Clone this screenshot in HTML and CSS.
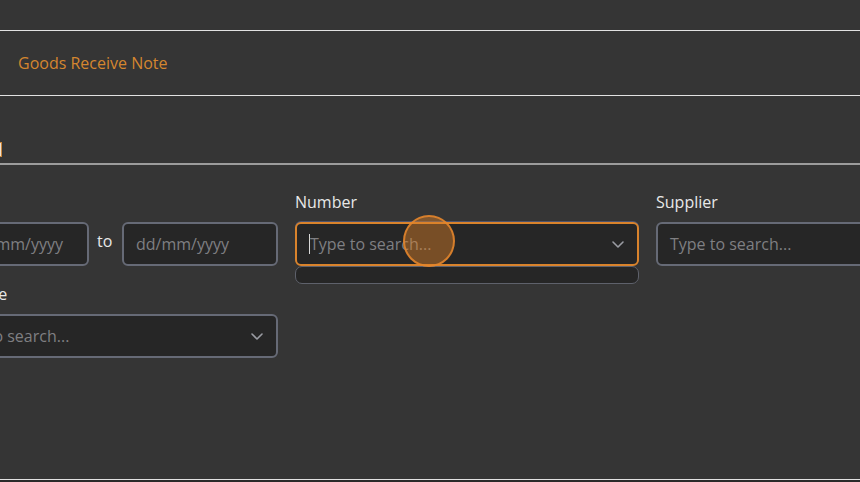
FILE: index.html
```html
<!DOCTYPE html>
<html>
<head>
<meta charset="utf-8">
<link rel="stylesheet" href="styles.css">
</head>
<body>
<div class="topbar"></div>
<header class="header"><span class="title">Goods Receive Note</span></header>
<nav class="tabs"><span class="tab-mark"></span></nav>
<main class="content">
  <div class="grid">
    <div class="field">
      <label class="label">Date</label>
      <div class="daterange">
        <div class="input date-from"><span class="ph">dd/mm/yyyy</span></div>
        <span class="to">to</span>
        <div class="input date-to"><span class="ph">dd/mm/yyyy</span></div>
      </div>
    </div>
    <div class="field">
      <label class="label">Number</label>
      <div class="select-wrap">
        <div class="input focused">
          <span class="caret"></span><span class="ph">Type to search...</span>
          <svg class="chev" width="14" height="14" viewBox="0 0 14 14"><path d="M2 5l5 5 5-5" fill="none" stroke="#9a9ca3" stroke-width="1.6" stroke-linecap="round" stroke-linejoin="round"/></svg>
        </div>
        <div class="dropdown"></div>
        <div class="touch"></div>
      </div>
    </div>
    <div class="field">
      <label class="label">Supplier</label>
      <div class="input"><span class="ph">Type to search...</span></div>
    </div>
    <div class="field">
      <label class="label">GRN Type</label>
      <div class="input">
        <span class="ph">Type to search...</span>
        <svg class="chev" width="14" height="14" viewBox="0 0 14 14"><path d="M2 5l5 5 5-5" fill="none" stroke="#9a9ca3" stroke-width="1.6" stroke-linecap="round" stroke-linejoin="round"/></svg>
      </div>
    </div>
  </div>
</main>
<footer class="footer"></footer>
</body>
</html>
```
FILE: styles.css
```css
html, body {
  margin: 0;
  padding: 0;
  background: #353535;
  font-family: "Open Sans", "Noto Sans", sans-serif;
  overflow: hidden;
  height: 482px;
}
.topbar {
  height: 30px;
  border-bottom: 1px solid #e2e2e2;
}
.header {
  height: 64px;
  display: flex;
  align-items: center;
  padding-left: 18px;
  border-bottom: 1px solid #e2e2e2;
}
.title {
  color: #d4862f;
  font-size: 16px;
}
.tabs {
  height: 67px;
  border-bottom: 2px solid #9c9c9c;
  position: relative;
}
.tab-mark {
  position: absolute;
  left: -4px;
  top: 46px;
  width: 6px;
  height: 15px;
  background: #f1e2cf;
  border: 1px solid #c9863c;
  box-sizing: border-box;
}
.content {
  height: 314px;
  padding-top: 26px;
  box-sizing: border-box;
  margin-left: -66px;
}
.grid {
  display: grid;
  grid-template-columns: 344px 344px 344px;
  column-gap: 17px;
  row-gap: 17px;
}
.field {
  display: flex;
  flex-direction: column;
  gap: 9px;
}
.label {
  color: #e8e8e8;
  font-size: 16px;
  line-height: 22px;
}
.input {
  height: 44px;
  box-sizing: border-box;
  border: 2px solid #666a76;
  border-radius: 6px;
  background: #262626;
  display: flex;
  align-items: center;
  padding: 0 12px;
  position: relative;
}
.ph {
  color: #7f7f82;
  font-size: 16px;
}
.daterange {
  display: flex;
  align-items: center;
  gap: 8px;
}
.date-from {
  flex: 1;
  margin-left: 22px;
}
.date-to {
  width: 156px;
}
.to {
  color: #e8e8e8;
  font-size: 16px;
  width: 17px;
  margin-top: -6px;
}
.select-wrap {
  position: relative;
}
.focused {
  border-color: #d9832c;
  box-shadow: 0 -1px 0 0 #4c5470;
}
.caret {
  width: 1px;
  height: 20px;
  background: #d8d8d8;
}
.chev {
  position: absolute;
  right: 12px;
  top: 13px;
}
.dropdown {
  position: absolute;
  left: 0;
  right: 0;
  top: 44px;
  height: 18px;
  box-sizing: border-box;
  border: 1px solid #5e616b;
  border-radius: 7px;
  background: #262626;
}
.touch {
  position: absolute;
  left: 108px;
  top: -7px;
  width: 52px;
  height: 52px;
  box-sizing: border-box;
  border-radius: 50%;
  background: rgba(222, 128, 40, 0.45);
  border: 2px solid rgba(230, 135, 45, 0.85);
}
.footer {
  height: 2px;
  border-top: 1px solid #e2e2e2;
  background: #2a2a2a;
}
```
